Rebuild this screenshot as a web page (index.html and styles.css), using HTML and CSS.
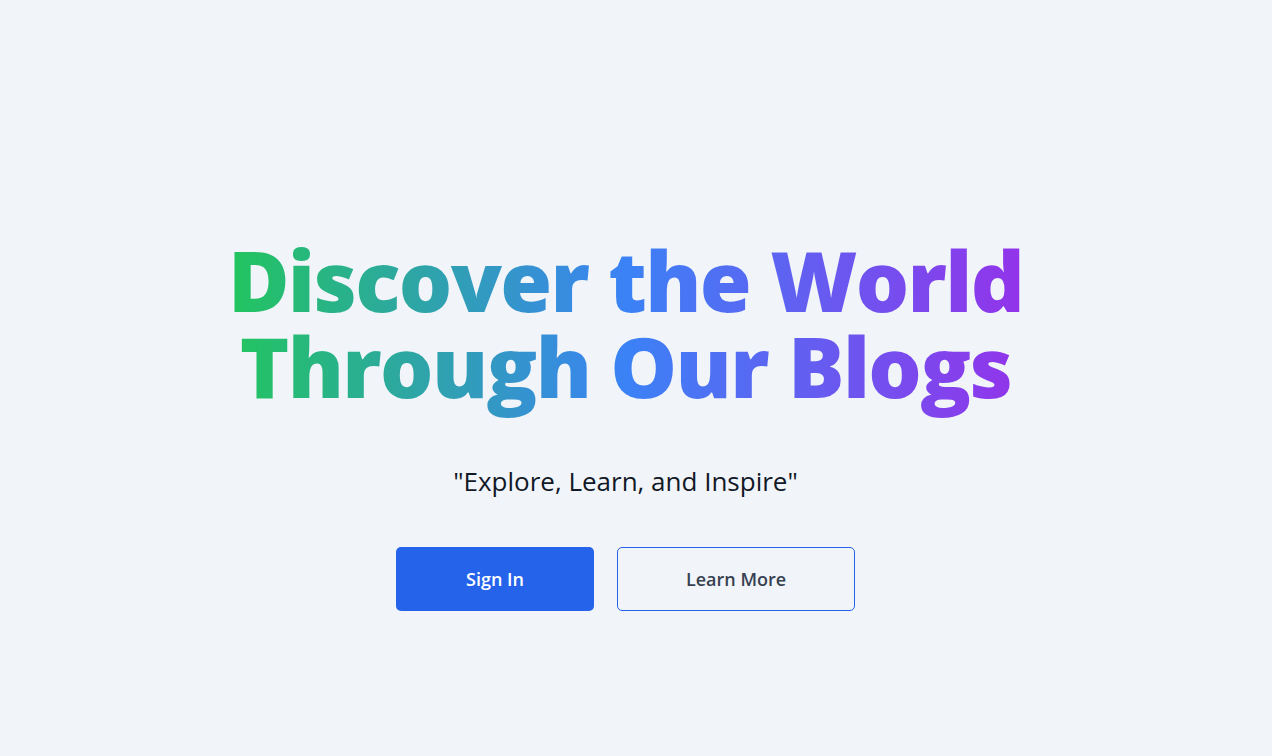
FILE: index.html
```html
<!DOCTYPE html>
<html lang="en">
<head>
<meta charset="utf-8">
<title>Discover the World</title>
<link rel="stylesheet" href="styles.css">
</head>
<body>
<main class="hero">
  <h1 class="title">Discover the World<br>Through Our Blogs</h1>
  <p class="tagline">"Explore, Learn, and Inspire"</p>
  <div class="actions">
    <a class="btn btn-primary" href="#">Sign In</a>
    <a class="btn btn-outline" href="#">Learn More</a>
  </div>
</main>
</body>
</html>
```
FILE: styles.css
```css
html, body {
  margin: 0;
  padding: 0;
}
body {
  background: #f1f5f9;
  font-family: "Open Sans", "Noto Sans", "DejaVu Sans", sans-serif;
  color: #111827;
  height: 756px;
  overflow: hidden;
}
.hero {
  display: flex;
  flex-direction: column;
  align-items: center;
  padding-top: 237px;
  padding-right: 21px;
}
.title {
  margin: 0;
  padding-bottom: 20px;
  font-size: 84px;
  line-height: 86px;
  font-weight: 800;
  text-align: center;
  letter-spacing: -1.7px;
  background: linear-gradient(90deg, #22c55e 0%, #3b82f6 50%, #9333ea 100%);
  -webkit-background-clip: text;
  background-clip: text;
  color: transparent;
}
.tagline {
  margin: 34px 0 0;
  font-size: 26px;
  line-height: 36px;
  font-weight: 400;
  color: #111827;
}
.actions {
  display: flex;
  gap: 23px;
  margin-top: 48px;
}
.btn {
  display: flex;
  align-items: center;
  justify-content: center;
  height: 64px;
  box-sizing: border-box;
  border-radius: 5px;
  font-size: 18px;
  font-weight: 600;
  text-decoration: none;
}
.btn-primary {
  width: 198px;
  background: #2563eb;
  color: #ffffff;
}
.btn-outline {
  width: 238px;
  border: 1px solid #2563eb;
  color: #374151;
}
```
